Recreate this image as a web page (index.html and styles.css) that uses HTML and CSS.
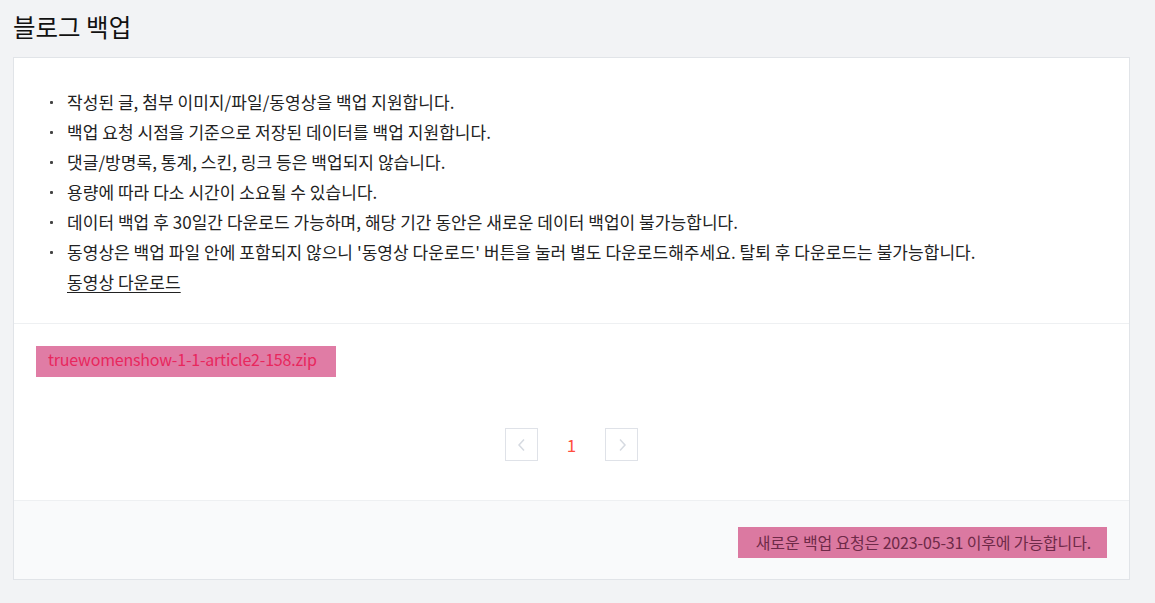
FILE: index.html
```html
<!DOCTYPE html>
<html>
<head>
    <title>블로그 백업</title>
    <link rel="stylesheet" href="styles.css">
</head>
<body>
    <h2 class="page-title">블로그 백업</h2>
    <div class="backup-card">
        <div class="backup-info">
            <ul class="info-list">
                <li>작성된 글, 첨부 이미지/파일/동영상을 백업 지원합니다.</li>
                <li>백업 요청 시점을 기준으로 저장된 데이터를 백업 지원합니다.</li>
                <li>댓글/방명록, 통계, 스킨, 링크 등은 백업되지 않습니다.</li>
                <li>용량에 따라 다소 시간이 소요될 수 있습니다.</li>
                <li>데이터 백업 후 30일간 다운로드 가능하며, 해당 기간 동안은 새로운 데이터 백업이 불가능합니다.</li>
                <li>동영상은 백업 파일 안에 포함되지 않으니 '동영상 다운로드' 버튼을 눌러 별도 다운로드해주세요. 탈퇴 후 다운로드는 불가능합니다.<br>
                    <a href="#" class="video-link">동영상 다운로드</a>
                </li>
            </ul>
        </div>
        <div class="backup-files">
            <div class="file-row">
                <a href="#" class="file-chip">truewomenshow-1-1-article2-158.zip</a>
            </div>
            <div class="pagination">
                <a href="#" class="page-arrow">
                    <svg width="10" height="14" viewBox="0 0 10 14"><path d="M7 1.5 L2 7 L7 12.5" fill="none" stroke="#d6dae1" stroke-width="1.5"/></svg>
                </a>
                <span class="page-num">1</span>
                <a href="#" class="page-arrow">
                    <svg width="10" height="14" viewBox="0 0 10 14"><path d="M3 1.5 L8 7 L3 12.5" fill="none" stroke="#d6dae1" stroke-width="1.5"/></svg>
                </a>
            </div>
        </div>
        <div class="backup-footer">
            <span class="notice-chip">새로운 백업 요청은 2023-05-31 이후에 가능합니다.</span>
        </div>
    </div>
</body>
</html>
```

FILE: styles.css
```css
body {
    margin: 0;
    padding: 0 25px 0 13px;
    background-color: #f2f3f5;
    font-family: "Noto Sans CJK KR", "Noto Sans", sans-serif;
    color: #222222;
}

.page-title {
    margin: 0;
    padding: 9px 0 0;
    height: 57px;
    box-sizing: border-box;
    font-size: 24.5px;
    font-weight: 400;
    line-height: 36px;
    color: #111111;
}

.backup-card {
    background-color: #ffffff;
    border: 1px solid #e1e4e8;
}

.backup-info {
    padding: 29px 30px 26px;
    border-bottom: 1px solid #eef0f2;
}

.info-list {
    margin: 0;
    padding: 0;
    list-style: none;
    font-size: 17px;
    line-height: 30px;
    letter-spacing: 0.05px;
}

.info-list li {
    position: relative;
    padding-left: 23px;
}

.info-list li::before {
    content: "";
    position: absolute;
    left: 6px;
    top: 14px;
    width: 3px;
    height: 3px;
    border-radius: 1px;
    background-color: #444444;
}

.video-link {
    color: #222222;
    text-decoration: underline;
    text-underline-offset: 3px;
}

.backup-files {
    padding: 22px 22px 39px;
    border-bottom: 1px solid #eef0f2;
}

.file-row {
    display: flex;
}

.file-chip {
    display: inline-block;
    height: 31px;
    line-height: 26px;
    padding: 0 19px 0 12px;
    background-color: #e07ca5;
    color: #e8275d;
    font-size: 16px;
    letter-spacing: -0.2px;
    text-decoration: none;
}

.pagination {
    display: flex;
    justify-content: center;
    align-items: center;
    margin-top: 51px;
}

.page-arrow {
    display: flex;
    align-items: center;
    justify-content: center;
    width: 33px;
    height: 33px;
    box-sizing: border-box;
    border: 1px solid #dfe2e8;
}

.page-num {
    width: 67px;
    text-align: center;
    color: #ff4f3f;
    font-size: 17px;
}

.backup-footer {
    display: flex;
    justify-content: flex-end;
    padding: 26px 22px 21px;
    background-color: #f9fafb;
}

.notice-chip {
    display: inline-block;
    height: 31px;
    line-height: 31px;
    padding: 0 16px 0 18px;
    background-color: #db79a1;
    color: #6e2a48;
    font-size: 16px;
    letter-spacing: -0.15px;
}
```
